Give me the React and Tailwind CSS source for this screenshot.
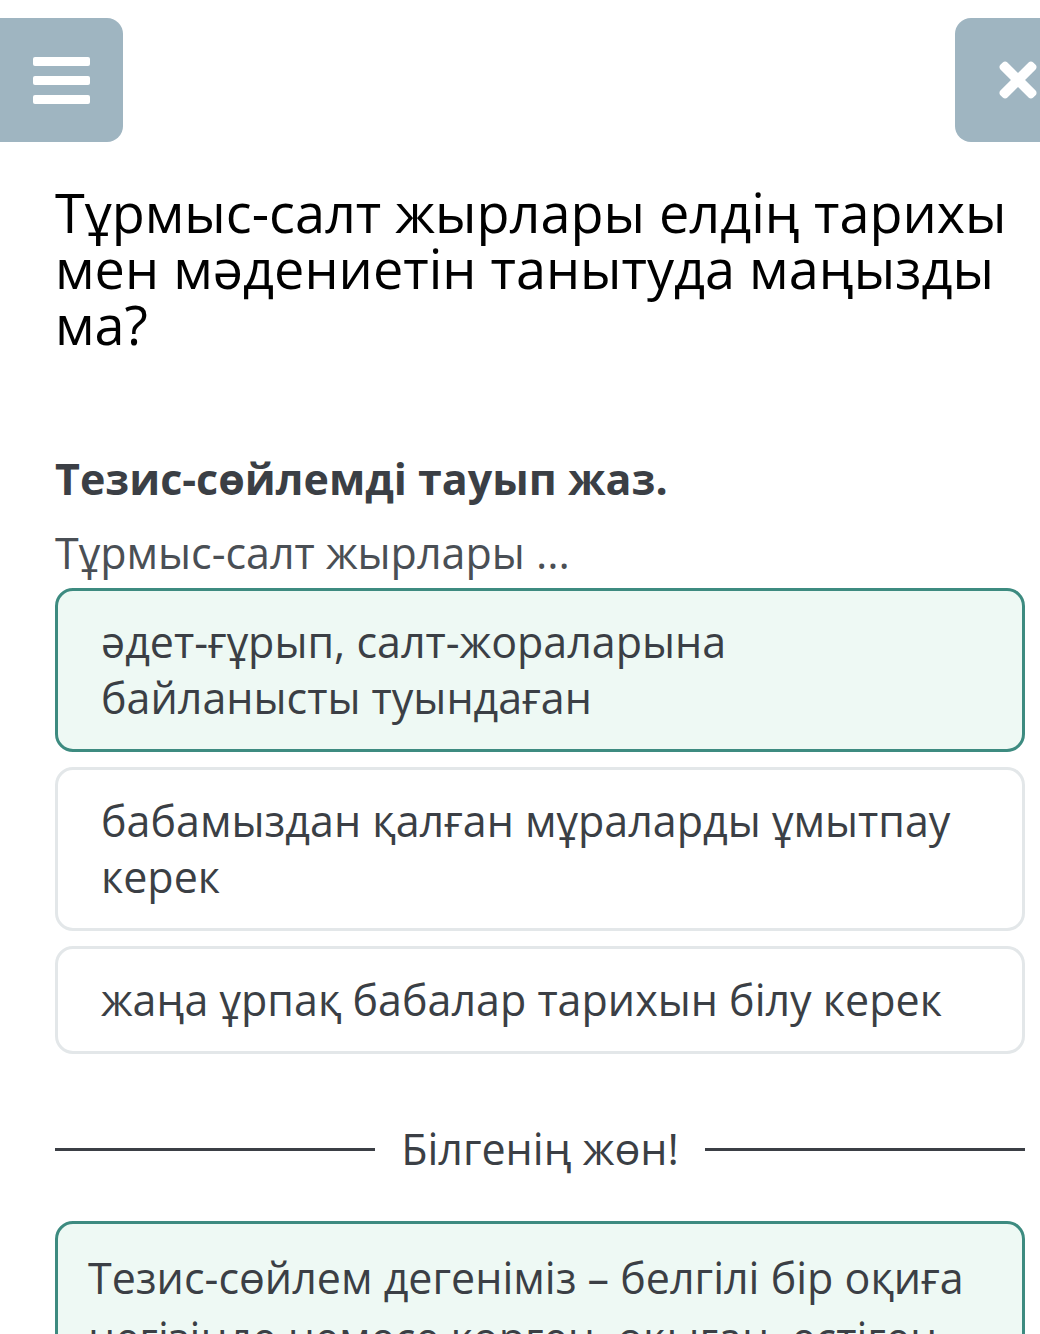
import { FaTimes } from 'react-icons/fa'

const OPTIONS = [
  { text: 'әдет-ғұрып, салт-жораларына байланысты туындаған', picked: true },
  { text: 'бабамыздан қалған мұраларды ұмытпау керек' },
  { text: 'жаңа ұрпақ бабалар тарихын білу керек' },
]

export default function App() {
  return (
    <div className="min-h-[1334px] bg-white overflow-hidden" style={{ fontFamily: '"Open Sans", "Noto Sans", sans-serif' }}>
      {/* top bar */}
      <div className="flex justify-between pt-[18px]">
        <button className="w-[123px] h-[124px] bg-[#9fb5c1] rounded-r-[16px] flex flex-col items-center justify-center gap-[10px]">
          <span className="block w-[57px] h-[9px] bg-white rounded-[2px]" />
          <span className="block w-[57px] h-[9px] bg-white rounded-[2px]" />
          <span className="block w-[57px] h-[9px] bg-white rounded-[2px]" />
        </button>
        <button className="w-[85px] h-[124px] bg-[#9fb5c1] rounded-l-[16px] flex items-center justify-start pl-[36px] overflow-hidden">
          <FaTimes className="text-white shrink-0" size={54} />
        </button>
      </div>

      <div className="pl-[55px] pr-[15px]">
        <h1 className="mt-[42px] text-[54px] leading-[56px] text-black font-normal">
          Тұрмыс-салт жырлары елдің тарихы мен мәдениетін танытуда маңызды ма?
        </h1>

        <p className="mt-[99px] text-[43px] leading-[56px] font-bold text-[#3b3f45]">Тезис-сөйлемді тауып жаз.</p>
        <p className="mt-[20px] text-[43px] leading-[52px] text-[#4a4f55]">Тұрмыс-салт жырлары ...</p>

        <div className="mt-[9px] flex flex-col gap-[15px]">
          {OPTIONS.map((o, i) => (
            <div key={i}
              className={`rounded-[18px] px-[43px] py-[23px] text-[43px] leading-[56px] text-[#3b3f45] ${o.picked ? 'border-[3px] border-[#3d8b80] bg-[#eef9f4]' : 'border-[3px] border-[#e3e7e9] bg-white'}`}>
              <span className={o.picked ? 'block max-w-[700px]' : 'block'}>{o.text}</span>
            </div>
          ))}
        </div>

        <div className="mt-[67px] flex items-center gap-[26px]">
          <div className="flex-1 h-[3px] bg-[#3b3f45]" />
          <span className="text-[43px] leading-[56px] text-[#3b3f45]">Білгенің жөн!</span>
          <div className="flex-1 h-[3px] bg-[#3b3f45]" />
        </div>

        <div className="mt-[44px] rounded-[18px] border-[3px] border-[#3d8b80] bg-[#eef9f4] px-[30px] py-[24px] text-[43px] leading-[60px] text-[#3b3f45]">
          Тезис-сөйлем дегеніміз – белгілі бір оқиға негізінде немесе көрген, оқыған, естіген
        </div>
      </div>
    </div>
  )
}
